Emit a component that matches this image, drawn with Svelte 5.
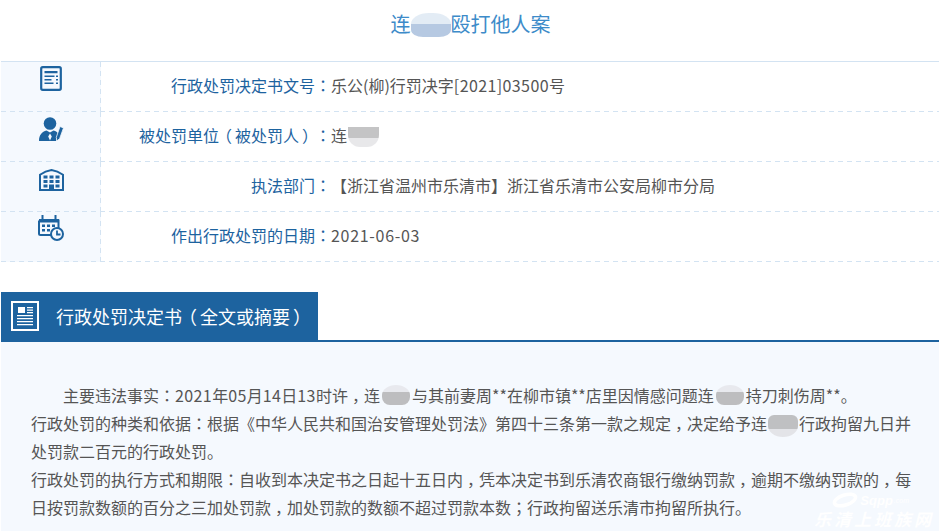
<script>
	const rows = [
		{ icon: 'doc', label: '行政处罚决定书文号：', before: '乐公(柳)行罚决字', num: '[2021]03500', after: '号' },
		{ icon: 'person', label: '被处罚单位（被处罚人）：', before: '连', redact: true },
		{ icon: 'building', label: '执法部门：', before: '【浙江省温州市乐清市】浙江省乐清市公安局柳市分局' },
		{ icon: 'calendar', label: '作出行政处罚的日期：', num: '2021-06-03' }
	];

	const marks = { '：': 'mid', '；': 'mid', '，': 'comma', '（': 'open', '）': 'close' };

	// the original font centres full-width punctuation in its cell
	function pieces(text = '') {
		return text.split(/([：；，（）])/).filter(Boolean);
	}
</script>

{#snippet txt(text)}
	{#each pieces(text) as piece}{#if marks[piece]}<span class={marks[piece]}>{piece}</span>{:else}{piece}{/if}{/each}
{/snippet}

<main>
	<h1>连<span class="patch title-patch"></span>殴打他人案</h1>

	<section class="info">
		{#each rows as row}
			<div class="row">
				<div class="icon {row.icon}">
					{#if row.icon === 'doc'}
						<svg width="22" height="25" viewBox="0 0 22 25">
							<rect x="1.2" y="1.2" width="19.6" height="22.6" rx="1.5" fill="none" stroke="#1d639f" stroke-width="2.2" />
							<path d="M4.500 5h13v2.200h-13zM4.500 9.500h10v1.500h-10zM4.500 13h7v1.500h-7zM4.500 16.500h9v1.500h-9zM16 9.500h2v1.500h-2zM16 13h2v1.500h-2zM16 16.500h2v1.500h-2z" fill="#1d639f" />
						</svg>
					{:else if row.icon === 'person'}
						<svg width="25" height="25" viewBox="0 0 25 25">
							<circle cx="11" cy="6.500" r="6.300" fill="#1d639f" />
							<path d="M0 24c0-6 3-9.500 7.500-10.500l3.500 2 3.500-2c2.500.6 3.800 1.600 4.500 3l-2 7.500zM11 16.500l-1.800 3 1.800 4 1.800-4z" fill="#1d639f" fill-rule="evenodd" />
							<path d="M21 9.500l3.500 1.400-3.800 10.500-2.700 2.600-.7-3.700z" fill="#1d639f" stroke="#f5f9fe" stroke-width=".8" />
						</svg>
					{:else if row.icon === 'building'}
						<svg width="25" height="22" viewBox="0 0 25 22">
							<path d="M1 21V5.800Q6.500 1.800 12.500 1 18.500 1.800 24 5.800V21z" fill="#f5f9fe" stroke="#1d639f" stroke-width="2" />
							<path d="M4.500 6.500h4v3h-4zM10.500 6.500h4v3h-4zM16.500 6.500h4v3h-4zM4.500 11h4v3h-4zM10.500 11h4v3h-4zM16.500 11h4v3h-4zM4.500 15.500h4v3h-4zM16.500 15.500h4v3h-4zM10 15.500h5V21h-5z" fill="#1d639f" />
						</svg>
					{:else}
						<svg width="26" height="26" viewBox="0 0 26 26">
							<path d="M1 5.500h19.500V14M13 20H2.500A1.500 1.500 0 0 1 1 18.500V5.500" fill="none" stroke="#1d639f" stroke-width="2" />
							<path d="M1 4h20v3.500H1zM3.500 0h2v5h-2zM16.500 0h2v5h-2zM4 9.500h3V12H4zM9 9.500h3V12H9zM14 9.500h3V12h-3zM4 14h3v2.500H4zM9 14h3v2.500H9z" fill="#1d639f" />
							<circle cx="19" cy="19" r="6" fill="#f5f9fe" stroke="#1d639f" stroke-width="2" />
							<path d="M19 15.500V19.500h3.500" fill="none" stroke="#1d639f" stroke-width="1.800" />
						</svg>
					{/if}
				</div>
				<div class="field">
					<span class="label">{@render txt(row.label)}</span>
					<span class="value">{row.before ?? ''}{#if row.num}<span class={row.icon === 'calendar' ? 'num wide' : 'num'}>{row.num}</span>{/if}{row.after ?? ''}{#if row.redact}<span class="patch name-patch"></span>{/if}</span>
				</div>
			</div>
		{/each}
	</section>

	<section class="decision">
		<header>
			<div class="tab">
				<svg width="28" height="30" viewBox="0 0 28 30">
					<rect x="1" y="1" width="26" height="28" fill="none" stroke="#fff" stroke-width="2" />
					<path d="M7 6h7v6H7zM16 6h6v1.200h-6zM16 8.500h6v1.200h-6zM16 11h6v1.200h-6zM6 14h16v1.200H6zM6 17h16v1.200H6zM6 20h16v1.200H6zM6 23h16v1.200H6z" fill="#fff" />
				</svg>
				<h2>{@render txt('行政处罚决定书（全文或摘要）')}</h2>
			</div>
		</header>
		<div class="body">
			<p class="lead">{@render txt('主要违法事实：')}<span class="num">2021</span>年<span class="num">05</span>月<span class="num">14</span>日<span class="num">13</span>时许{@render txt('，')}连<span class="patch haze-top"></span>与其前妻周**在柳市镇**店里因情感问题连<span class="patch haze-top"></span>持刀刺伤周**。</p>
			<p>{@render txt('行政处罚的种类和依据：')}根据《中华人民共和国治安管理处罚法》第四十三条第一款之规定{@render txt('，')}决定给予连<span class="patch haze-bottom"></span>行政拘留九日并处罚款二百元的行政处罚。</p>
			<p>{@render txt('行政处罚的执行方式和期限：自收到本决定书之日起十五日内，凭本决定书到乐清农商银行缴纳罚款，逾期不缴纳罚款的，每日按罚款数额的百分之三加处罚款，加处罚款的数额不超过罚款本数；行政拘留送乐清市拘留所执行。')}</p>
		</div>
		<div class="watermark">
			<div class="logo">
				<svg width="28" height="16" viewBox="0 0 28 16">
					<ellipse cx="14" cy="8" rx="11" ry="5" transform="rotate(-18 14 8)" fill="none" stroke="#fff" stroke-width="3.500" />
				</svg>
				<b>Sqpp</b><small>.com</small>
			</div>
			<span>乐清上班族网</span>
		</div>
	</section>
</main>

<style>
	:global(body) {
		margin: 0;
		background: #fff;
	}

	main {
		width: 941px;
		height: 531px;
		overflow: hidden;
		font-family: "Noto Sans CJK SC", "Noto Sans", sans-serif;
		font-size: 16px;
		color: #555;
		text-spacing-trim: space-all;
	}

	.mid {
		font-family: "Noto Sans CJK TC", sans-serif;
	}

	.comma,
	.open,
	.close {
		display: inline-block;
		text-indent: 0;
	}

	.comma {
		translate: 4px 0;
	}

	.open {
		translate: -3px 0;
	}

	.close {
		translate: 3px 0;
	}

	.num {
		letter-spacing: 0.4px;
	}

	.wide {
		letter-spacing: 0.7px;
	}

	h1 {
		margin: 0;
		height: 61px;
		padding-top: 8px;
		box-sizing: border-box;
		text-align: center;
		font-size: 20px;
		font-weight: 400;
		line-height: 32px;
		color: #3d8bc9;
	}

	.info {
		width: 938px;
		margin-left: 1px;
		border-top: 1px solid #d3e3f2;
	}

	.row {
		display: grid;
		grid-template-columns: 100px 1fr;
		height: 50px;
		background: repeating-linear-gradient(90deg, #d3e3f2 0 5px, transparent 5px 9px) left bottom / 100% 1px no-repeat;
	}

	.icon {
		display: flex;
		justify-content: center;
		background:
			repeating-linear-gradient(180deg, #d3e3f2 0 5px, transparent 5px 9px) right top / 1px 100% no-repeat,
			repeating-linear-gradient(90deg, #d3e3f2 0 5px, transparent 5px 9px) left bottom / 100% 1px no-repeat,
			#f5f9fe;
		box-sizing: border-box;
	}

	.icon svg {
		display: block;
	}

	.doc {
		padding-top: 4px;
	}

	.person {
		padding-top: 5px;
	}

	.building {
		padding-top: 7px;
	}

	.calendar {
		padding-top: 3px;
	}

	.field {
		display: grid;
		grid-template-columns: 230px 1fr;
		align-items: center;
		padding-bottom: 4px;
		line-height: 24px;
	}

	.label {
		color: #1d639f;
		text-align: right;
	}

	.decision {
		position: relative;
		width: 938px;
		margin: 30px 0 0 1px;
	}

	header {
		border-bottom: 2px solid #1d639f;
	}

	.tab {
		display: flex;
		align-items: center;
		gap: 17px;
		width: 317px;
		height: 48px;
		padding-left: 10px;
		box-sizing: border-box;
		background: #1d639f;
	}

	h2 {
		margin: 0;
		font-size: 18px;
		font-weight: 400;
		color: #fff;
		white-space: nowrap;
	}

	.body {
		height: 189px;
		box-sizing: border-box;
		padding: 39px 25px 0 30px;
		background: #f5f9fe;
	}

	p {
		margin: 0;
		line-height: 28px;
	}

	.lead {
		text-indent: 32px;
	}

	.patch {
		display: inline-block;
		text-indent: 0;
	}

	.title-patch {
		width: 40px;
		height: 24px;
		vertical-align: -5px;
		border-radius: 45% 45% 30% 30%;
		background: linear-gradient(#e3ecf5 45%, #b6c9e2 45%);
	}

	.name-patch {
		width: 31px;
		height: 20px;
		margin-left: 1px;
		vertical-align: -5px;
		border-radius: 0 0 12px 12px;
		background: linear-gradient(#c4c4c5 55%, #e8e8ea 55%);
	}

	.haze-top {
		width: 28px;
		height: 20px;
		margin: 0 2px;
		vertical-align: -3px;
		border-radius: 50% 50% 8px 8px;
		background: linear-gradient(#e8e9ee 35%, #bdbdbf 35%);
	}

	.haze-bottom {
		width: 30px;
		height: 22px;
		margin: 0 1px;
		vertical-align: -7px;
		border-radius: 6px 6px 50% 50%;
		background: linear-gradient(#bfc0c2 65%, #e3e4e8 65%);
	}

	.watermark {
		position: absolute;
		right: 5px;
		bottom: 0;
		display: flex;
		flex-direction: column;
		align-items: flex-end;
		color: #fff;
		line-height: 1;
		white-space: nowrap;
		pointer-events: none;
	}

	.watermark > span {
		font-size: 17px;
		font-weight: 700;
		font-style: italic;
		letter-spacing: 3px;
		padding-bottom: 4px;
	}

	.logo {
		display: flex;
		align-items: center;
		gap: 1px;
		margin-right: 25px;
		margin-bottom: 2px;
		font-family: "Liberation Sans", sans-serif;
		font-style: italic;
		font-size: 13px;
	}

	.logo small {
		font-size: 7px;
	}
</style>
